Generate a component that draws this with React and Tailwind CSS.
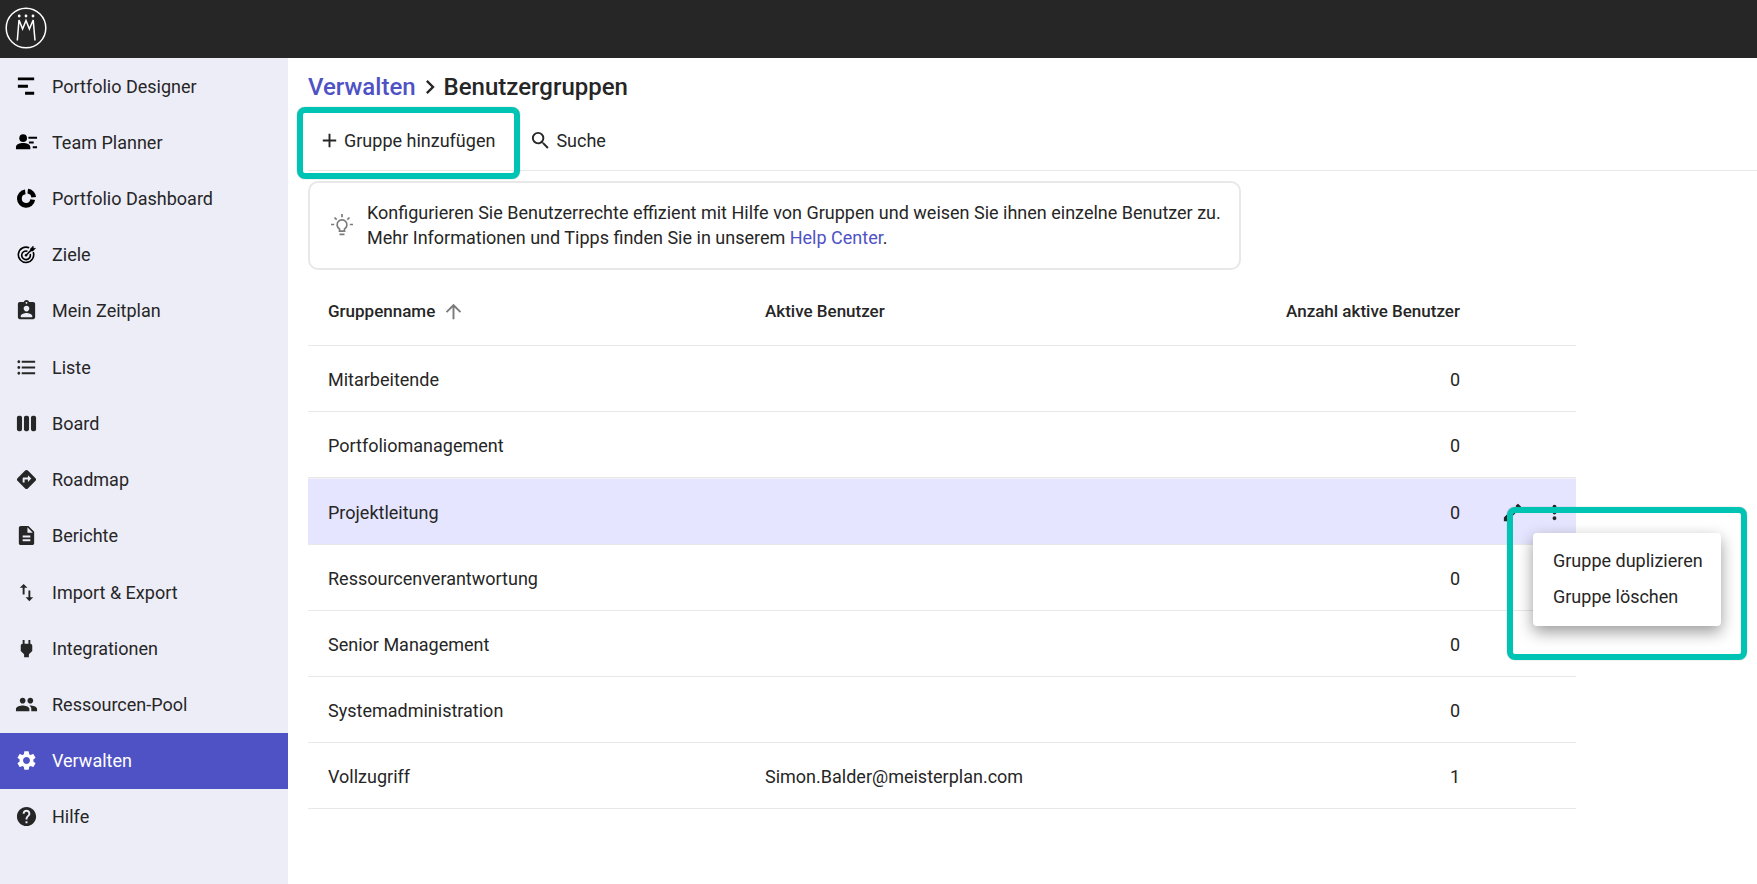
import React from "react";
import {
  MdAssignmentInd, MdFormatListBulleted, MdViewWeek, MdDirections, MdDescription, MdImportExport,
  MdPower, MdPeople, MdSettings, MdHelp, MdAdd, MdSearch, MdChevronRight, MdArrowUpward, MdEdit, MdMoreVert,
} from "react-icons/md";

function PlannerIcon(props) {
  return (
    <svg viewBox="0 0 24 24" width="23" height="23" fill="currentColor" {...props}>
      <path d="M3 2.500h17v3H3zM3 10.300h10.500v3H3zM10.500 17.500h9.500v3h-9.500z" />
    </svg>
  );
}

function TeamIcon(props) {
  return (
    <svg viewBox="0 0 24 24" width="23" height="23" fill="currentColor" {...props}>
      <circle cx="8.500" cy="7.500" r="4" />
      <path d="M1 19v-2.200c0-2.900 4-4.300 7.500-4.300s7.500 1.400 7.500 4.300V19zM14 6h9v2h-9zM14.500 11h5v2h-5zM18.500 16H23v2h-4.500z" />
    </svg>
  );
}

function DashboardIcon(props) {
  return (
    <svg viewBox="0 0 24 24" width="23" height="23" fill="none" stroke="currentColor" strokeWidth="5" {...props}>
      <path d="M10.700 5.200A7 7 0 1 0 18.500 13.200" />
      <path d="M13.300 4.300A7 7 0 0 1 19.500 10.700" />
    </svg>
  );
}

function TargetIcon(props) {
  return (
    <svg viewBox="0 0 24 24" width="23" height="23" fill="none" stroke="currentColor" strokeWidth="1.700" {...props}>
      <path d="M14.800 5A8 8 0 1 0 19 9.500" />
      <path d="M13 8.600A4.500 4.500 0 1 0 15.800 11.500" />
      <path d="M11.500 12.800L18 6.300" />
      <circle cx="11.500" cy="12.800" r="1" fill="currentColor" strokeWidth="0.800" />
      <path d="M16.200 6L19 3.200V5.600h2.400L18.600 8.400H16.200z" fill="currentColor" strokeWidth="0.600" />
    </svg>
  );
}

function Logo() {
  return (
    <svg viewBox="0 0 42 42" className="size-[42px]" fill="none" stroke="white" aria-label="Meisterplan" role="img">
      <circle cx="21" cy="21" r="19.800" strokeWidth="1.500" />
      <path d="M12.300 33.500L14 13L17.600 22L21 13.500L24.400 22L28.200 13L30 33.500" strokeWidth="1.500" />
      <g fill="white" stroke="none">
        <circle cx="14.200" cy="9" r="1.400" />
        <circle cx="21" cy="9" r="1.400" />
        <circle cx="28" cy="9" r="1.400" />
      </g>
    </svg>
  );
}

function BulbIcon() {
  return (
    <svg viewBox="0 0 24 24" className="size-[24px] shrink-0 text-[#7b7b7b]" fill="none" stroke="currentColor" strokeWidth="1.700" aria-hidden="true">
      <path d="M9.500 18.200v-2.300a4.900 4.900 0 1 1 5 0v2.300zM9.500 21.300h5" />
      <path d="M12 1v3.200M4.500 4.500l2.200 2.200M19.500 4.500l-2.200 2.200M1 11.500h3.200M19.800 11.500H23" />
    </svg>
  );
}

const navItems = [
  { label: "Portfolio Designer", Icon: PlannerIcon, dark: true },
  { label: "Team Planner", Icon: TeamIcon, dark: true },
  { label: "Portfolio Dashboard", Icon: DashboardIcon, dark: true },
  { label: "Ziele", Icon: TargetIcon, dark: true },
  { label: "Mein Zeitplan", Icon: MdAssignmentInd },
  { label: "Liste", Icon: MdFormatListBulleted },
  { label: "Board", Icon: MdViewWeek },
  { label: "Roadmap", Icon: MdDirections },
  { label: "Berichte", Icon: MdDescription },
  { label: "Import & Export", Icon: MdImportExport },
  { label: "Integrationen", Icon: MdPower },
  { label: "Ressourcen-Pool", Icon: MdPeople },
  { label: "Verwalten", Icon: MdSettings, active: true },
  { label: "Hilfe", Icon: MdHelp },
];

const groups = [
  { name: "Mitarbeitende", users: "", count: 0 },
  { name: "Portfoliomanagement", users: "", count: 0 },
  { name: "Projektleitung", users: "", count: 0, selected: true },
  { name: "Ressourcenverantwortung", users: "", count: 0 },
  { name: "Senior Management", users: "", count: 0 },
  { name: "Systemadministration", users: "", count: 0 },
  { name: "Vollzugriff", users: "Simon.Balder@meisterplan.com", count: 1 },
];

const frame = "pointer-events-none absolute rounded-[8px] border-[6px] border-[#00c4b3] shadow-[0_0_1px_rgba(0,0,0,0.5)]";

function RowActions() {
  return (
    <div className="relative flex items-center justify-end gap-[19px] pr-[10px]">
      <button type="button" aria-label="Gruppe bearbeiten"><MdEdit size={23} /></button>
      <button type="button" aria-label="Weitere Aktionen"><MdMoreVert size={23} /></button>
      <div className={`${frame} left-[47px] top-[6px] z-10 h-[153px] w-[240px]`} />
      <div role="menu" className="absolute left-[73px] top-[32px] z-20 flex w-[188px] flex-col rounded-[4px] bg-white pb-[12px] pt-[9px] shadow-[0_6px_16px_rgba(0,0,0,0.4)]">
        <button type="button" role="menuitem" className="h-[36px] whitespace-nowrap px-5 text-left">Gruppe duplizieren</button>
        <button type="button" role="menuitem" className="h-[36px] whitespace-nowrap px-5 text-left">Gruppe löschen</button>
      </div>
    </div>
  );
}

export default function App() {
  return (
    <div className="flex min-h-screen flex-col overflow-x-hidden bg-white font-[Roboto,sans-serif] text-[18px] leading-[25px] text-[#262626]">
      <header className="flex h-[58px] shrink-0 items-start bg-[#262626] px-[5px] pt-[7px]">
        <Logo />
      </header>
      <div className="flex flex-1">
        <nav className="flex w-[288px] shrink-0 flex-col bg-[#ededf8] pb-[39px]">
          {navItems.map(({ label, Icon, active, dark }) => (
            <a
              key={label}
              href="#"
              aria-current={active ? "page" : undefined}
              className={`flex flex-1 items-center gap-[14px] px-[15px] ${active ? "bg-[#4f52c4] text-white" : ""}`}
            >
              <Icon size={23} aria-hidden="true" className={dark ? "shrink-0 text-black" : "shrink-0"} />
              <span>{label}</span>
            </a>
          ))}
        </nav>
        <main className="min-w-0 flex-1 pl-5">
          <h1 className="flex items-center pt-[13px] text-[24px] font-medium leading-[32px]">
            <a href="#" className="text-[#4f52c4]">Verwalten</a>
            <MdChevronRight size={28} aria-hidden="true" />
            <span>Benutzergruppen</span>
          </h1>
          <div className="flex items-center gap-[34px] border-b border-[#e8e8e8] pb-[17px] pl-[10px] pt-[25px]">
            <button type="button" className="relative flex items-center gap-[3px]">
              <MdAdd size={23} aria-hidden="true" />
              Gruppe hinzufügen
              <span className={`${frame} -bottom-[26px] -left-[21px] -right-[25px] -top-[21px]`} />
            </button>
            <button type="button" className="flex items-center gap-[4px]">
              <MdSearch size={23} aria-hidden="true" />
              Suche
            </button>
          </div>
          <section className="mt-[10px] flex w-[933px] max-w-full items-center gap-[13px] rounded-[10px] border-2 border-[#e8e8e8] pb-[18px] pl-5 pr-2 pt-[17px]">
            <BulbIcon />
            <p>
              Konfigurieren Sie Benutzerrechte effizient mit Hilfe von Gruppen und weisen Sie ihnen einzelne Benutzer zu.
              <br />
              Mehr Informationen und Tipps finden Sie in unserem <a href="#" className="text-[#4f52c4]">Help Center</a>.
            </p>
          </section>
          <table className="mt-[10px] w-[1268px] table-fixed border-separate border-spacing-0">
            <colgroup>
              <col className="w-[437px]" />
              <col />
              <col className="w-[240px]" />
              <col className="w-[116px]" />
            </colgroup>
            <thead>
              <tr className="h-[66px] text-[17px] *:border-b *:border-[#e8e8e8] *:pb-[2px] *:font-medium">
                <th scope="col" className="px-5 text-left">
                  <span className="flex items-center gap-[7px]">
                    Gruppenname
                    <MdArrowUpward size={23} className="text-[#7b7b7b]" aria-hidden="true" />
                  </span>
                </th>
                <th scope="col" className="px-5 text-left">Aktive Benutzer</th>
                <th scope="col" className="text-right">Anzahl aktive Benutzer</th>
                <td />
              </tr>
            </thead>
            <tbody>
              {groups.map((g) => (
                <tr
                  key={g.name}
                  className={`*:border-b *:border-[#e8e8e8] *:pt-[2px] ${g.selected ? "h-[67px] bg-[#e5e5ff] *:border-t *:border-t-[#f2f2f6]" : "h-[66px]"}`}
                >
                  <td className="px-5">{g.name}</td>
                  <td className="px-5">{g.users}</td>
                  <td className="text-right">{g.count}</td>
                  <td>{g.selected && <RowActions />}</td>
                </tr>
              ))}
            </tbody>
          </table>
        </main>
      </div>
    </div>
  );
}
